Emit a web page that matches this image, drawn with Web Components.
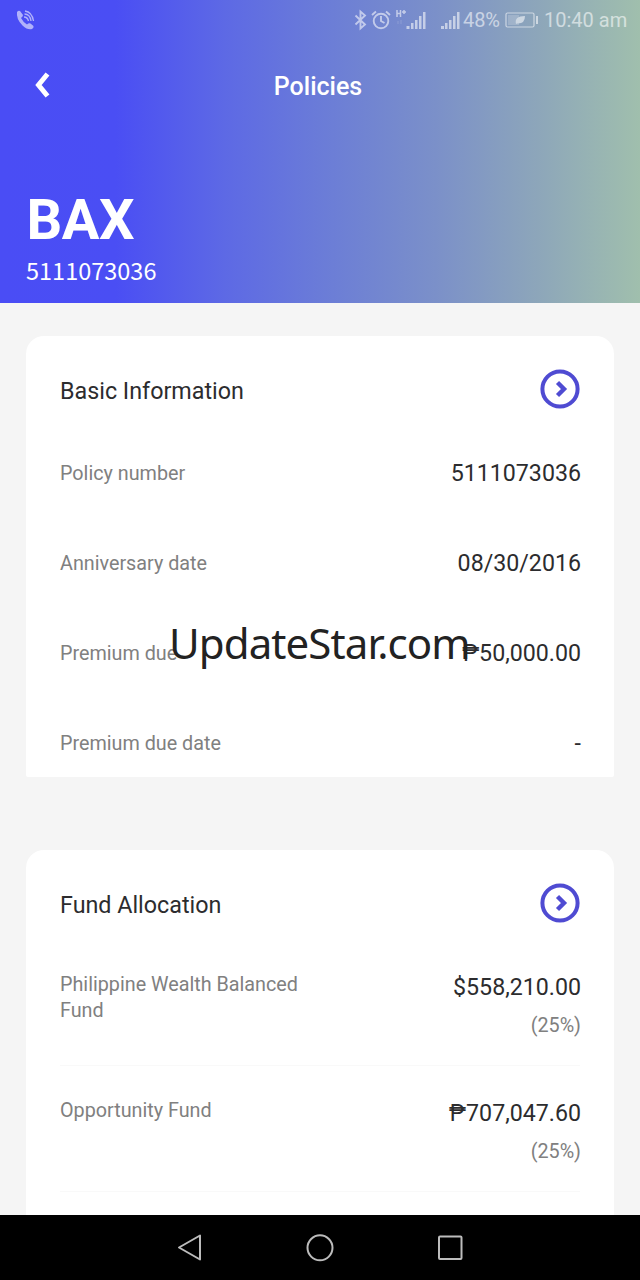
<!DOCTYPE html>
<html lang="en"><head><meta charset="utf-8"><title>Policies</title>
<style>html,body{margin:0;height:1280px;overflow:hidden}body{font-family:Roboto,"Noto Sans",sans-serif;background:#f5f5f5}</style></head>
<body>
<policy-app></policy-app>
<script>
const define = (name, html) => customElements.define(name, class extends HTMLElement {
  constructor() {
    super();
    const t = document.createElement('template');
    t.innerHTML = html;
    this.attachShadow({ mode: 'open' }).append(t.content.cloneNode(true));
  }
});

define('status-bar', `
<style>
:host{display:flex;align-items:center;height:40px;padding:0 13px 0 15px;box-sizing:border-box;color:#fff;opacity:.57}
svg{display:block;flex:none}
.space{flex:1}
span{font-size:20px;line-height:40px;white-space:nowrap}
.pct{margin-left:3px;width:37px;letter-spacing:-.1px}
.time{margin-left:5px;width:83px;letter-spacing:0}
</style>
<svg width="22" height="22" viewBox="0 0 22 22" fill="none" stroke="#fff">
<path fill="#fff" stroke="none" d="M2 3Q3.500 1 5 2L8 6Q8 7.500 6 9Q8 13 12 15.500Q14 13.500 15.500 14.500L18.500 17Q19 19 17 20Q13 21.500 7.500 16.500Q1 10 2 3Z"/>
<path stroke-width="1.300" d="M10 2Q17 3 18.500 12M9.500 5Q15 5 16 12M9 8Q12.500 8 13.500 12"/></svg>
<div class="space"></div>
<svg width="14" height="22" viewBox="0 0 14 22" fill="none" stroke="#fff" stroke-width="1.900"><path d="M1.500 6.500L11 15.500L6.500 19.500V2.500L11 6.500L1.500 15.500"/></svg>
<svg style="margin-left:3px" width="20" height="22" viewBox="0 0 20 22" fill="none" stroke="#fff" stroke-width="1.900"><circle cx="10" cy="12" r="7.300"/><path d="M10 7V12L13.500 14M1 6L5 2.500M15 2.500L19 6"/></svg>
<svg style="margin-left:5px" width="30" height="24" viewBox="1 0 30 24"><path d="M2 2V9M5.500 2V9M2 5.500H5.500M7 4H11M9 2V6" stroke="#fff" stroke-width="1.500"/><path opacity=".3" d="M3 13V16M6 12V16" stroke="#fff"/><path d="M11.500 18h3v3h-3zM16 15h2.500v6H16zM20 12h2.500v9H20zM24 8h2.500v13H24zM28 4h2.500v17H28z" fill="#fff"/></svg>
<svg style="margin-left:14px" width="20" height="24" viewBox="0 0 20 24"><path d="M1 18h3v3H1zM5 15h2.500v6H5zM9 12h2.500v9H9zM13 8h2.500v13H13zM17 4H19.500v17H17z" fill="#fff"/></svg>
<span class="pct">48%</span>
<svg style="margin-left:5px" width="34" height="18" viewBox="0 0 34 18"><rect x="1" y="2" width="28" height="14" rx="1.500" fill="none" stroke="#fff" stroke-width="1.200"/><rect x="3" y="4" width="11" height="10" fill="#fff" opacity=".35"/><path d="M11 13Q9 5 20 5Q20 13 12 12.500Z" fill="#fff"/><path d="M32 5V13" stroke="#fff" stroke-width="2"/></svg>
<span class="time">10:40 am</span>`);

define('page-header', `
<style>
:host{display:block;height:303px;color:#fff;background:linear-gradient(90deg,#4a4df5 0%,#4a4ef4 18%,#5d69e5 35%,#6c7ed6 52%,#7b90c9 68%,#8da6ba 84%,#a0bfad 100%)}
nav{display:grid;grid-template-columns:84px 1fr 84px;height:91px;align-items:center}
svg{display:block;margin:-2px 0 0 34px}
h1{margin:2px 0 0 -4px;text-align:center;font-size:25px;font-weight:500;letter-spacing:0;line-height:30px}
h2{margin:58.500px 0 0 26.500px;font-size:56px;line-height:60px;font-weight:700;letter-spacing:-.4px}
p{margin:5.500px 0 0 26px;font:400 23.500px/30px "Noto Sans CJK SC",sans-serif}
</style>
<status-bar></status-bar>
<nav><svg width="16" height="28" viewBox="0 0 16 28" fill="none" stroke="#fff" stroke-width="5"><path d="M13.500 3L4.500 14L13.500 25"/></svg><h1>Policies</h1></nav>
<h2>BAX</h2><p>5111073036</p>`);

define('info-card', `
<style>
:host{display:block;box-sizing:border-box;margin:0 26px;padding:0 34px;background:#fff;border-radius:18px 18px 2px 2px}
header{display:flex;justify-content:space-between;align-items:center;height:106px}
h3{margin:4px 0 0;font-size:23.300px;font-weight:400;color:#2c2c2e;line-height:30px}
</style>
<header><h3><slot name="title"></slot></h3>
<svg width="40" height="40" viewBox="0 0 40 40" fill="none" stroke="#4f4bd2" stroke-width="4"><circle cx="20" cy="20" r="17.600"/><path stroke-width="4.400" d="M17.500 13.500L24 20L17.500 26.500"/></svg></header>
<slot></slot>`);

define('info-row', `
<style>
:host{display:flex;justify-content:space-between;height:90px;box-sizing:border-box;color:#808080;font-size:19.750px;line-height:26px}
.label{width:250px;padding-top:1px}
.value{color:#2c2c2e;font-size:23.200px;text-align:right;line-height:26px;white-space:nowrap;margin:var(--value-shift,0px) -1px 0 0}
.note{display:block;text-align:right;margin:13px -1px 0 0}
</style>
<div class="label"><slot name="label"></slot></div>
<div><div class="value"><slot></slot></div><div class="note"><slot name="note"></slot></div></div>`);

define('site-watermark', `
<style>:host{position:absolute;left:169px;top:613px;font:400 42px/60px "Noto Sans","Open Sans",sans-serif;letter-spacing:-.9px;color:#222;white-space:nowrap}</style><slot></slot>`);

define('nav-bar', `
<style>:host{display:flex;height:65px;background:#000;align-items:center;justify-content:center;gap:102px}svg{display:block}</style>
<svg width="28" height="30" viewBox="0 0 28 30" fill="none" stroke="#bcbcbc" stroke-width="2" stroke-linejoin="round"><path d="M4 14.500L25 2.500V26.500Z"/></svg>
<svg width="30" height="30" viewBox="0 0 30 30" fill="none" stroke="#bcbcbc" stroke-width="2"><circle cx="15" cy="14.800" r="12.500"/></svg>
<svg width="28" height="30" viewBox="0 0 28 30" fill="none" stroke="#bcbcbc" stroke-width="2"><rect x="2" y="3.500" width="22.500" height="22.500" rx="1"/></svg>`);

define('policy-app', `
<style>
:host{display:flex;flex-direction:column;width:640px;height:1280px;position:relative;overflow:hidden}
main{height:912px;padding-top:33px;box-sizing:border-box;overflow:hidden}
.basic{height:441px}
.basic info-row:first-of-type{margin-top:18px}
.fund{margin-top:73px;height:400px}
.fund info-row{--value-shift:3px;border-bottom:1px solid #f9f9f9;height:126px;padding-top:31px}
.fund info-row:first-of-type{height:110px;padding-top:15px}
</style>
<page-header></page-header>
<main>
<info-card class="basic"><span slot="title">Basic Information</span>
<info-row><span slot="label">Policy number</span>5111073036</info-row>
<info-row><span slot="label">Anniversary date</span>08/30/2016</info-row>
<info-row><span slot="label">Premium due</span>₱50,000.00</info-row>
<info-row><span slot="label">Premium due date</span>-</info-row></info-card>
<info-card class="fund"><span slot="title">Fund Allocation</span>
<info-row><span slot="label">Philippine Wealth Balanced Fund</span>$558,210.00<span slot="note">(25%)</span></info-row>
<info-row><span slot="label">Opportunity Fund</span>₱707,047.60<span slot="note">(25%)</span></info-row></info-card>
</main>
<nav-bar></nav-bar>
<site-watermark>UpdateStar.com</site-watermark>`);
</script></body></html>
